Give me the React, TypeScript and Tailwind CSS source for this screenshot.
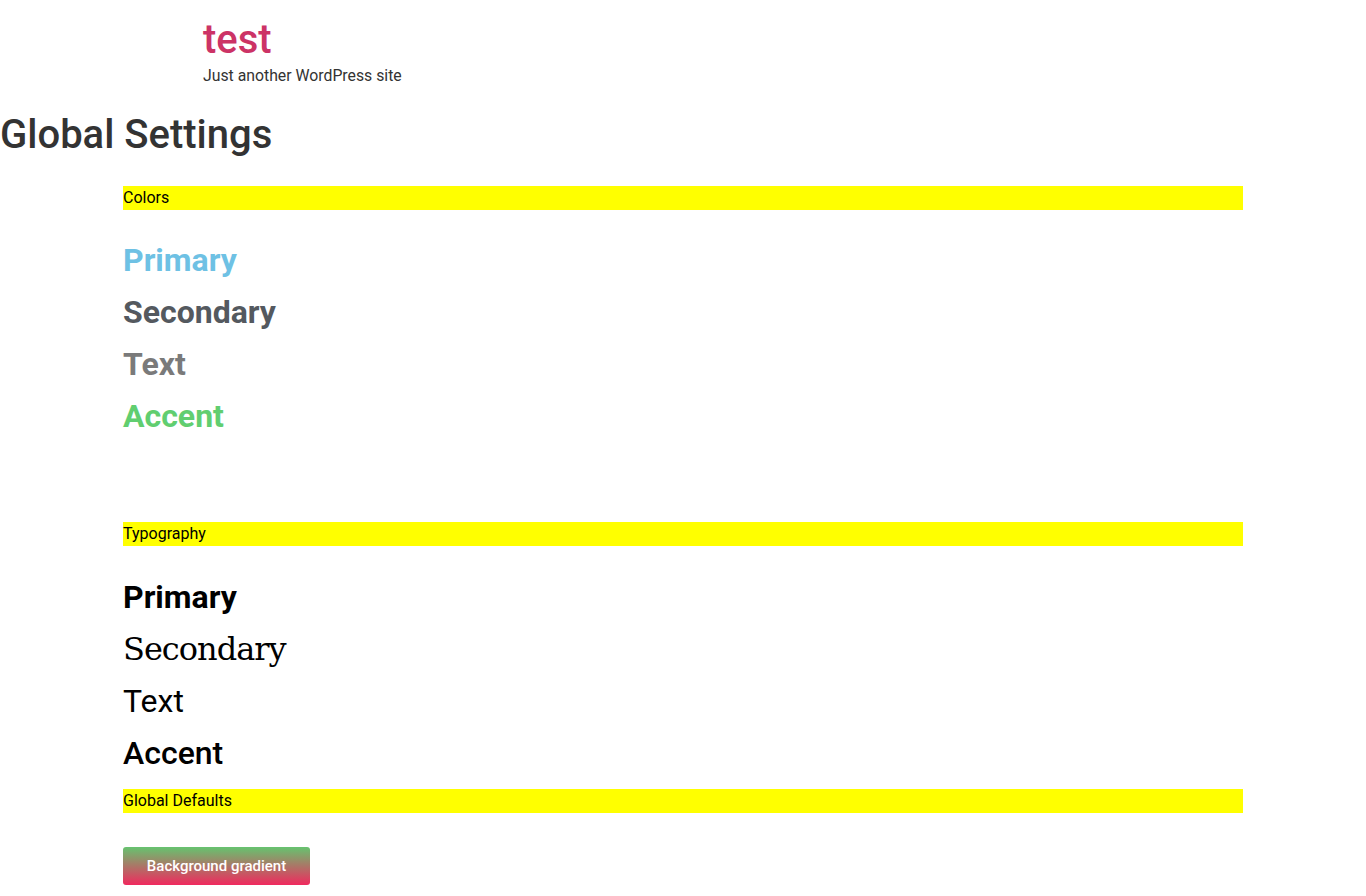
const colors = [
  { name: 'Primary', color: 'text-[#6EC1E4]' },
  { name: 'Secondary', color: 'text-[#54595F]' },
  { name: 'Text', color: 'text-[#7A7A7A]' },
  { name: 'Accent', color: 'text-[#61CE70]' },
]

function Band({ label }: { label: string }) {
  return <div className="bg-[#ffff00] text-black text-[16px] leading-[24px] h-[24px]">{label}</div>
}

export default function App() {
  return (
    <div className="min-h-[896px] bg-white font-['Roboto','Liberation_Sans',sans-serif] text-[#333]">
      {/* Header */}
      <header className="max-w-[960px] mx-auto pt-[16px]">
        <div className="text-[40px] leading-[48px] font-medium text-[#cc3366]">test</div>
        <p className="text-[15.8px] leading-[24px] text-[#333]">Just another WordPress site</p>
      </header>

      <h1 className="text-[40px] leading-[48px] font-medium text-[#333] mt-[23px]">Global Settings</h1>

      <main className="max-w-[1120px] mx-auto mt-[27px]">
        <Band label="Colors" />
        <div className="mt-[24px]">
          {colors.map((c) => (
            <div key={c.name} className={`h-[52px] flex items-center text-[32px] font-bold ${c.color}`}>
              {c.name}
            </div>
          ))}
        </div>

        <div className="mt-[80px]">
          <Band label="Typography" />
        </div>
        <div className="mt-[25px] text-black">
          <div className="h-[52px] flex items-center text-[32px] font-bold">Primary</div>
          <div className="h-[52px] flex items-center text-[32px] font-normal font-['DejaVu_Serif',serif] tracking-[-1px]">Secondary</div>
          <div className="h-[52px] flex items-center text-[32px] font-normal">Text</div>
          <div className="h-[52px] flex items-center text-[32px] font-medium">Accent</div>
        </div>

        <div className="mt-[10px]">
          <Band label="Global Defaults" />
        </div>
        <div className="mt-[34px]">
          <button className="h-[38px] w-[187px] rounded-[3px] bg-[linear-gradient(180deg,#66C36F_0%,#F0295E_100%)] text-white text-[15px] font-medium">
            Background gradient
          </button>
        </div>
      </main>
    </div>
  )
}
